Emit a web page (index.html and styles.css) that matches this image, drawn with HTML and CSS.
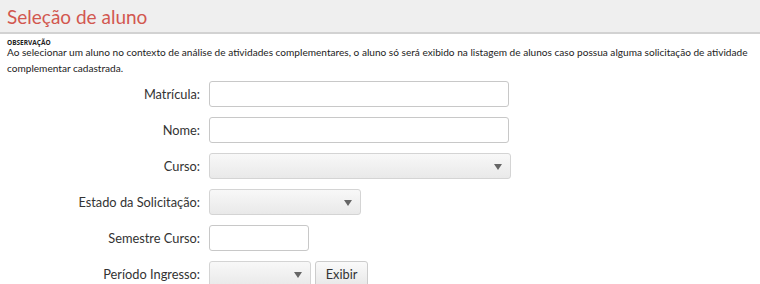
FILE: index.html
```html
<!DOCTYPE html>
<html lang="pt">
<head>
<meta charset="utf-8">
<link rel="stylesheet" href="styles.css">
</head>
<body>
<div class="header"><h1 class="title">Seleção de aluno</h1></div>
<div class="content">
  <div class="obs-label">OBSERVAÇÃO</div>
  <p class="obs-text">Ao selecionar um aluno no contexto de análise de atividades complementares, o aluno só será exibido na listagem de alunos caso possua alguma solicitação de atividade complementar cadastrada.</p>
  <form class="form">
    <label class="lbl">Matrícula:</label>
    <div class="field"><input class="inp w300" type="text"></div>
    <label class="lbl">Nome:</label>
    <div class="field"><input class="inp w300" type="text"></div>
    <label class="lbl">Curso:</label>
    <div class="field"><div class="sel w302"><span class="arrow"></span></div></div>
    <label class="lbl">Estado da Solicitação:</label>
    <div class="field"><div class="sel w152"><span class="arrow"></span></div></div>
    <label class="lbl">Semestre Curso:</label>
    <div class="field"><input class="inp w100" type="text"></div>
    <label class="lbl">Período Ingresso:</label>
    <div class="field"><div class="sel w102"><span class="arrow"></span></div><button class="btn" type="button">Exibir</button></div>
  </form>
</div>
</body>
</html>
```
FILE: styles.css
```css
html, body { margin: 0; padding: 0; background: #fff; }
body { font-family: Lato, "Open Sans", sans-serif; color: #333; }
.header { background: #efefef; height: 32px; border-bottom: 2px solid #d2d2d2; padding-left: 7px; }
.title { margin: 0; font-weight: 400; font-size: 19px; line-height: 33px; color: #d2574f; }
.content { padding: 0 3px 0 7px; }
.obs-label { font-family: "Open Sans", sans-serif; font-size: 6.5px; font-weight: 700; margin-top: 6px; height: 6px; line-height: 6px; color: #222; }
.obs-text { margin: -2px 0 0; font-size: 10.1px; line-height: 16px; color: #222; }
.form { display: grid; grid-template-columns: 193px auto; column-gap: 9px; row-gap: 10px; margin-top: 5px; align-items: center; }
.lbl { text-align: right; font-size: 12.8px; color: #333; }
.field { display: flex; gap: 4px; align-items: center; }
.inp { box-sizing: border-box; height: 26px; border: 1px solid #c8c8c8; border-radius: 3px; background: #fff; margin: 0; padding: 0 6px; }
.sel { box-sizing: border-box; height: 26px; border: 1px solid #d4d4d4; border-radius: 3px; background: linear-gradient(#f8f8f8, #e9e9e9); position: relative; }
.arrow { position: absolute; right: 8px; top: 10px; width: 0; height: 0; border-left: 4px solid transparent; border-right: 4px solid transparent; border-top: 6px solid #666; }
.w300 { width: 300px; }
.w302 { width: 302px; }
.w152 { width: 152px; }
.w100 { width: 100px; }
.w102 { width: 102px; }
.btn { box-sizing: border-box; height: 26px; width: 53px; border: 1px solid #ccc; border-radius: 3px; background: linear-gradient(#fafafa, #e8e8e8); font-family: inherit; font-size: 12.8px; color: #333; padding: 0; }
```
